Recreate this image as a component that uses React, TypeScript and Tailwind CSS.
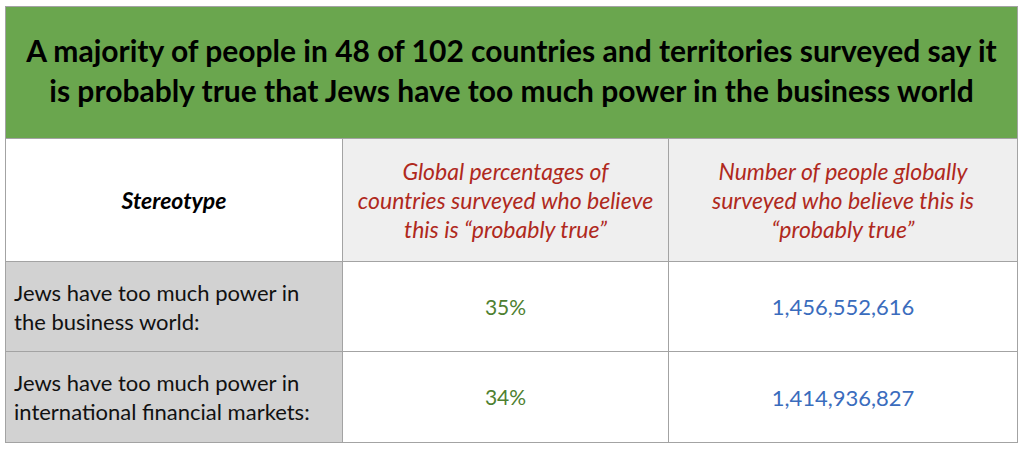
import React from 'react';

interface Row {
  label: string[];
  percent: string;
  people: string;
}

const rows: Row[] = [
  { label: ['Jews have too much power in', 'the business world:'], percent: '35%', people: '1,456,552,616' },
  { label: ['Jews have too much power in', 'international financial markets:'], percent: '34%', people: '1,414,936,827' },
];

const App: React.FC = () => {
  return (
    <div className="w-[1024px] h-[453px] bg-white pt-[6px] pl-[5px] font-['Lato','Noto_Sans',sans-serif]">
      <div className="w-[1013px] border border-[#a3a3a3]">
        {/* title banner */}
        <div className="h-[132px] bg-[#6aa64e] flex flex-col items-center justify-center pb-[6px] border-b border-[#a3a3a3]">
          <p className="text-[30px] font-bold leading-[40px] text-black text-center">
            A majority of people in 48 of 102 countries and territories surveyed say it
            <br />
            is probably true that Jews have too much power in the business world
          </p>
        </div>

        {/* column headers */}
        <div className="grid grid-cols-[337px_326px_348px] h-[123px] border-b border-[#a3a3a3]">
          <div className="bg-white flex items-center justify-center border-r border-[#a3a3a3]">
            <span className="text-[23px] font-bold italic text-black">Stereotype</span>
          </div>
          <div className="bg-[#efefef] flex items-center justify-center border-r border-[#a3a3a3]">
            <p className="text-[23px] italic leading-[29px] text-[#b0291d] text-center">
              Global percentages of
              <br />
              countries surveyed who believe
              <br />
              this is “probably true”
            </p>
          </div>
          <div className="bg-[#efefef] flex items-center justify-center">
            <p className="text-[23px] italic leading-[29px] text-[#b0291d] text-center">
              Number of people globally
              <br />
              surveyed who believe this is
              <br />
              “probably true”
            </p>
          </div>
        </div>

        {/* data rows */}
        {rows.map((row, i) => (
          <div
            key={row.percent}
            className={`grid grid-cols-[337px_326px_348px] h-[90px] ${i === 0 ? 'border-b border-[#a3a3a3]' : ''}`}
          >
            <div className="bg-[#d2d2d2] flex items-center pl-[8px] border-r border-[#a3a3a3]">
              <p className="text-[22px] leading-[29px] text-[#111111]">
                {row.label[0]}
                <br />
                {row.label[1]}
              </p>
            </div>
            <div className="bg-white flex items-center justify-center border-r border-[#a3a3a3]">
              <span className="text-[21px] text-[#4e8030]">{row.percent}</span>
            </div>
            <div className="bg-white flex items-center justify-center">
              <span className="text-[22px] text-[#3a6cbd]">{row.people}</span>
            </div>
          </div>
        ))}
      </div>
    </div>
  );
};

export default App;
